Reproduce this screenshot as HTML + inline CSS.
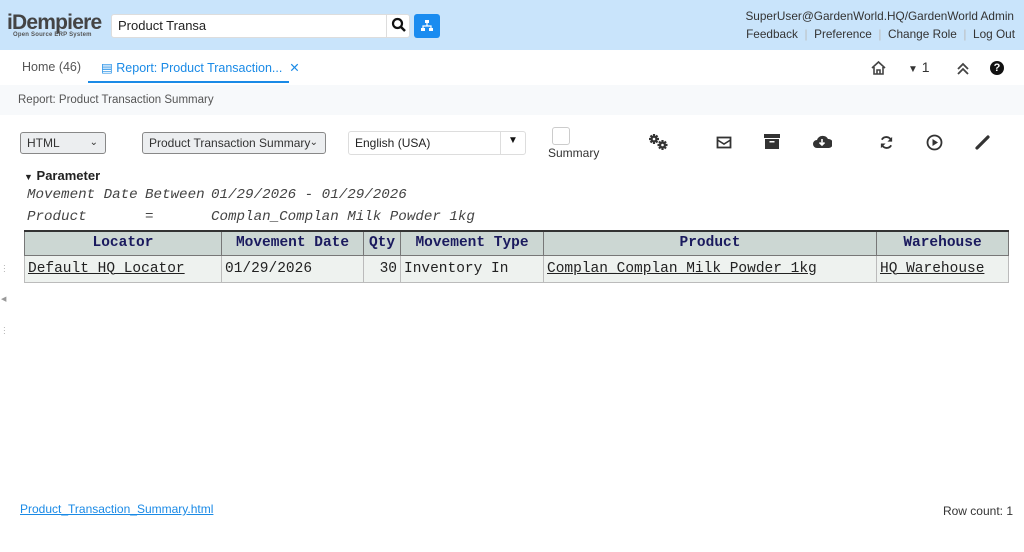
<!DOCTYPE html>
<html><head><meta charset="utf-8"><style>
*{box-sizing:border-box}
body{margin:0;width:1024px;height:552px;background:#fff;font-family:"Liberation Sans",sans-serif;position:relative;overflow:hidden;color:#333}
.a{position:absolute}
.hdr{left:0;top:0;width:1024px;height:50px;background:#c9e4fb}
.mono{font-family:"Liberation Mono",monospace;font-size:14.2px;font-style:italic;color:#444;white-space:pre}
table{border-collapse:collapse;font-family:"Liberation Mono",monospace;font-size:14.5px}
th{background:#ccd7d3;color:#1a1a5e;font-weight:bold;border:1px solid #777;border-top:2px solid #333;height:24px;padding:0 3px}
td{background:#eef2ef;border:1px solid #bbb;height:27px;padding:0 3px;color:#222}
td u{text-decoration:underline}
.sel{border:1px solid #888;border-radius:3px;background:#eceef0;font-size:12px;height:22px;line-height:20px;padding-left:6px}
</style></head><body>
<div class="a hdr"></div>
<div class="a" style="left:7px;top:11px;font-size:21px;font-weight:bold;color:#444;letter-spacing:-0.8px">iDempiere</div>
<div class="a" style="left:13px;top:32px;font-size:6px;font-weight:bold;color:#555;letter-spacing:0.2px">Open Source ERP System</div>
<div class="a" style="left:111px;top:14px;width:299px;height:24px;background:#fff;border-radius:3px;border:1px solid #ddd;font-size:13px;line-height:22px;padding-left:6px;color:#222">Product Transa</div>
<div class="a" style="left:386px;top:15px;width:1px;height:22px;background:#ddd"></div>
<svg class="a" style="left:391px;top:17px" width="16" height="16" viewBox="0 0 16 16"><circle cx="6.5" cy="6.5" r="4.5" fill="none" stroke="#111" stroke-width="2.2"/><path d="M10 10l4 4" stroke="#111" stroke-width="2.5"/></svg>
<div class="a" style="left:414px;top:14px;width:26px;height:24px;background:#1a8cf0;border-radius:3px"></div>
<svg class="a" style="left:420px;top:19px" width="14" height="14" viewBox="0 0 14 14" fill="#fff"><rect x="5" y="1" width="4" height="3"/><rect x="1" y="9" width="4" height="3"/><rect x="9" y="9" width="4" height="3"/><path d="M7 4v3M3 9V7h8v2" stroke="#fff" stroke-width="1.2" fill="none"/></svg>
<div class="a" style="right:10px;top:9px;font-size:11.8px;color:#333">SuperUser@GardenWorld.HQ/GardenWorld Admin</div>
<div class="a" style="right:9px;top:27px;font-size:11.8px;color:#333">Feedback <span style="color:#bbb">&nbsp;|&nbsp;</span> Preference <span style="color:#bbb">&nbsp;|&nbsp;</span> Change Role <span style="color:#bbb">&nbsp;|&nbsp;</span> Log Out</div>
<div class="a" style="left:22px;top:60px;font-size:12.5px;color:#555">Home (46)</div>
<div class="a" style="left:101px;top:60px;font-size:12.5px;color:#1a8ae6">&#9636; Report: Product Transaction... &nbsp;✕</div>
<div class="a" style="left:88px;top:81px;width:201px;height:2px;background:#1a8ae6"></div>
<svg class="a" style="left:870px;top:60px" width="17" height="16" viewBox="0 0 17 16"><path d="M2 8L8.5 2L15 8M4 7v7h9V7M7 14v-4h3v4" fill="none" stroke="#444" stroke-width="1.6"/></svg>
<div class="a" style="left:908px;top:59px;font-size:14px;color:#333"><span style="font-size:10px">▼</span> 1</div>
<svg class="a" style="left:956px;top:61px" width="14" height="14" viewBox="0 0 14 14"><path d="M2 8l5-5 5 5M2 13l5-5 5 5" fill="none" stroke="#444" stroke-width="1.8"/></svg>
<div class="a" style="left:990px;top:61px;width:14px;height:14px;border-radius:50%;background:#111;color:#fff;font-size:11px;font-weight:bold;text-align:center;line-height:14px">?</div>
<div class="a" style="left:0;top:85px;width:1024px;height:30px;background:#f7f9fb"></div>
<div class="a" style="left:18px;top:94px;font-size:11.5px;color:#555">Report: Product Transaction Summary</div>
<div class="a sel" style="left:20px;top:132px;width:86px">HTML<span style="position:absolute;right:7px;font-size:10px">⌄</span></div>
<div class="a sel" style="left:142px;top:132px;width:184px">Product Transaction Summary<span style="position:absolute;right:7px;font-size:10px">⌄</span></div>
<div class="a" style="left:348px;top:131px;width:178px;height:24px;border:1px solid #ddd;border-radius:3px;font-size:12px;line-height:22px;padding-left:6px;color:#222">English (USA)</div>
<div class="a" style="left:500px;top:132px;width:1px;height:22px;background:#ddd"></div>
<div class="a" style="left:508px;top:135px;font-size:10px;color:#111">▼</div>
<div class="a" style="left:552px;top:127px;width:18px;height:18px;border:1px solid #ccc;border-radius:3px"></div>
<div class="a" style="left:548px;top:146px;font-size:12px;color:#333">Summary</div>
<svg class="a" style="left:648px;top:133px" width="22" height="18" viewBox="0 0 22 18"><g fill="#333"><circle cx="6" cy="6" r="3.5"/><circle cx="14.5" cy="12" r="3.5"/><g stroke="#333" stroke-width="2.2"><path d="M6 1v10M1 6h10M2.5 2.5l7 7M9.5 2.5l-7 7M14.5 7v10M9.5 12h10M11 8.5l7 7M18 8.5l-7 7"/></g></g><circle cx="6" cy="6" r="1.3" fill="#fff"/><circle cx="14.5" cy="12" r="1.3" fill="#fff"/></svg>
<svg class="a" style="left:716px;top:136px" width="16" height="13" viewBox="0 0 16 13"><rect x="1.5" y="1.5" width="13" height="10" fill="none" stroke="#333" stroke-width="1.8"/><path d="M1.5 4l6.5 4 6.5-4" fill="none" stroke="#333" stroke-width="1.6"/></svg>
<svg class="a" style="left:764px;top:134px" width="16" height="15" viewBox="0 0 16 15"><rect x="0" y="0" width="16" height="4" fill="#333"/><rect x="1" y="5" width="14" height="10" fill="#333"/><rect x="5.5" y="7" width="5" height="1.5" fill="#fff"/></svg>
<svg class="a" style="left:812px;top:134px" width="20" height="15" viewBox="0 0 20 15"><path d="M5 14a4 4 0 010-8 6 6 0 0111-1 4.5 4.5 0 011 9z" fill="#333"/><path d="M10 5v6M7.5 8.5L10 11l2.5-2.5" stroke="#fff" stroke-width="1.6" fill="none"/></svg>
<svg class="a" style="left:879px;top:135px" width="15" height="15" viewBox="0 0 16 16"><path d="M13 6A5.5 5.5 0 003 5M3 10a5.5 5.5 0 0010 1" fill="none" stroke="#333" stroke-width="2"/><path d="M14 2v5h-5zM2 14V9h5z" fill="#333"/></svg>
<svg class="a" style="left:926px;top:134px" width="17" height="17" viewBox="0 0 17 17"><circle cx="8.5" cy="8.5" r="7" fill="none" stroke="#333" stroke-width="1.8"/><path d="M6.5 5v7l5.5-3.5z" fill="#333"/></svg>
<svg class="a" style="left:975px;top:134px" width="16" height="16" viewBox="0 0 16 16"><path d="M2 14L13 3" stroke="#333" stroke-width="3.2" stroke-linecap="round"/></svg>
<div class="a" style="left:24px;top:168px;font-size:13px;font-weight:bold;color:#222"><span style="font-size:9px">▼</span> Parameter</div>
<div class="a mono" style="left:27px;top:187px">Movement Date</div>
<div class="a mono" style="left:145px;top:187px">Between</div>
<div class="a mono" style="left:211px;top:187px">01/29/2026 - 01/29/2026</div>
<div class="a mono" style="left:27px;top:209px">Product</div>
<div class="a mono" style="left:145px;top:209px">=</div>
<div class="a mono" style="left:211px;top:209px">Complan_Complan Milk Powder 1kg</div>
<table class="a" style="left:24px;top:230px;width:985px">
<tr><th style="width:197px">Locator</th><th style="width:142px">Movement Date</th><th style="width:37px">Qty</th><th style="width:143px">Movement Type</th><th style="width:333px">Product</th><th>Warehouse</th></tr>
<tr><td><u>Default HQ Locator</u></td><td>01/29/2026</td><td style="text-align:right">30</td><td>Inventory In</td><td><u>Complan_Complan Milk Powder 1kg</u></td><td><u>HQ Warehouse</u></td></tr>
</table>
<div class="a" style="left:20px;top:502px;font-size:12px;color:#1a8ae6;text-decoration:underline">Product_Transaction_Summary.html</div>
<div class="a" style="right:11px;top:504px;font-size:12px;color:#333">Row count: 1</div>
<div class="a" style="left:3px;top:264px;font-size:8px;color:#999;line-height:3px">·<br>·<br>·</div>
<div class="a" style="left:1px;top:295px;font-size:7px;color:#999">◀</div>
<div class="a" style="left:3px;top:326px;font-size:8px;color:#999;line-height:3px">·<br>·<br>·</div>
</body></html>
